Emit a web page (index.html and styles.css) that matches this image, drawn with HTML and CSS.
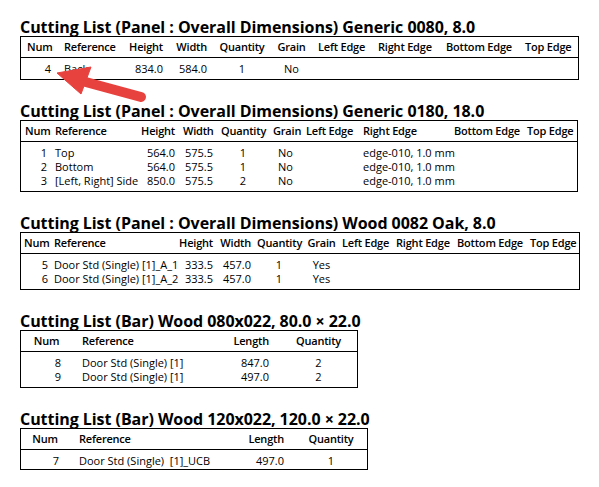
FILE: index.html
```html
<!DOCTYPE html>
<html lang="en">
<head>
<meta charset="utf-8">
<title>Cutting List</title>
<link rel="stylesheet" href="styles.css">
</head>
<body>
<main class="page">
  <section class="sheet">
    <h2 class="title">Cutting List (Panel : Overall Dimensions) Generic 0080, 8.0</h2>
    <table class="grid t1">
      <colgroup><col><col><col><col><col><col><col><col><col><col></colgroup>
      <thead>
        <tr><th class="r">Num</th><th class="l">Reference</th><th class="r">Height</th><th class="r">Width</th><th class="c">Quantity</th><th class="c">Grain</th><th class="l">Left Edge</th><th class="l">Right Edge</th><th class="l">Bottom Edge</th><th class="l">Top Edge</th></tr>
      </thead>
      <tbody>
        <tr><td class="r">4</td><td class="l">Back</td><td class="r">834.0</td><td class="r">584.0</td><td class="c">1</td><td class="c">No</td><td></td><td></td><td></td><td></td></tr>
      </tbody>
    </table>
  </section>

  <section class="sheet">
    <h2 class="title">Cutting List (Panel : Overall Dimensions) Generic 0180, 18.0</h2>
    <table class="grid t2">
      <colgroup><col><col><col><col><col><col><col><col><col><col></colgroup>
      <thead>
        <tr><th class="r">Num</th><th class="l">Reference</th><th class="r">Height</th><th class="r">Width</th><th class="c">Quantity</th><th class="c">Grain</th><th class="l">Left Edge</th><th class="l">Right Edge</th><th class="l">Bottom Edge</th><th class="l">Top Edge</th></tr>
      </thead>
      <tbody>
        <tr><td class="r">1</td><td class="l">Top</td><td class="r">564.0</td><td class="r">575.5</td><td class="c">1</td><td class="c">No</td><td></td><td class="l">edge-010, 1.0 mm</td><td></td><td></td></tr>
        <tr><td class="r">2</td><td class="l">Bottom</td><td class="r">564.0</td><td class="r">575.5</td><td class="c">1</td><td class="c">No</td><td></td><td class="l">edge-010, 1.0 mm</td><td></td><td></td></tr>
        <tr><td class="r">3</td><td class="l">[Left, Right] Side</td><td class="r">850.0</td><td class="r">575.5</td><td class="c">2</td><td class="c">No</td><td></td><td class="l">edge-010, 1.0 mm</td><td></td><td></td></tr>
      </tbody>
    </table>
  </section>

  <section class="sheet">
    <h2 class="title">Cutting List (Panel : Overall Dimensions) Wood 0082 Oak, 8.0</h2>
    <table class="grid t3">
      <colgroup><col><col><col><col><col><col><col><col><col><col></colgroup>
      <thead>
        <tr><th class="r">Num</th><th class="l">Reference</th><th class="r">Height</th><th class="r">Width</th><th class="c">Quantity</th><th class="c">Grain</th><th class="l">Left Edge</th><th class="l">Right Edge</th><th class="l">Bottom Edge</th><th class="l">Top Edge</th></tr>
      </thead>
      <tbody>
        <tr><td class="r">5</td><td class="l">Door Std (Single) [1]_A_1</td><td class="r">333.5</td><td class="r">457.0</td><td class="c">1</td><td class="c">Yes</td><td></td><td></td><td></td><td></td></tr>
        <tr><td class="r">6</td><td class="l">Door Std (Single) [1]_A_2</td><td class="r">333.5</td><td class="r">457.0</td><td class="c">1</td><td class="c">Yes</td><td></td><td></td><td></td><td></td></tr>
      </tbody>
    </table>
  </section>

  <section class="sheet">
    <h2 class="title">Cutting List (Bar) Wood 080x022, 80.0 × 22.0</h2>
    <table class="grid t4 bar">
      <colgroup><col><col><col><col></colgroup>
      <thead>
        <tr><th class="c">Num</th><th class="l">Reference</th><th class="r">Length</th><th class="c">Quantity</th></tr>
      </thead>
      <tbody>
        <tr><td class="r">8</td><td class="l">Door Std (Single) [1]</td><td class="r">847.0</td><td class="c">2</td></tr>
        <tr><td class="r">9</td><td class="l">Door Std (Single) [1]</td><td class="r">497.0</td><td class="c">2</td></tr>
      </tbody>
    </table>
  </section>

  <section class="sheet">
    <h2 class="title">Cutting List (Bar) Wood 120x022, 120.0 × 22.0</h2>
    <table class="grid t5 bar">
      <colgroup><col><col><col><col></colgroup>
      <thead>
        <tr><th class="c">Num</th><th class="l">Reference</th><th class="r">Length</th><th class="c">Quantity</th></tr>
      </thead>
      <tbody>
        <tr><td class="r">7</td><td class="l">Door Std (Single)&nbsp; [1]_UCB</td><td class="r">497.0</td><td class="c">1</td></tr>
      </tbody>
    </table>
  </section>
</main>

<svg class="callout" width="599" height="487" viewBox="0 0 599 487" aria-hidden="true">
  <line x1="82" y1="81" x2="141" y2="97" class="shaft"/>
  <polygon points="57,73 91,67 81,94" class="head"/>
</svg>
</body>
</html>
```

FILE: styles.css
```css
html, body {
  margin: 0;
  padding: 0;
  background: #ffffff;
}

body {
  position: relative;
  width: 599px;
  height: 487px;
  overflow: hidden;
  font-family: "Open Sans", "Noto Sans", "DejaVu Sans", sans-serif;
  color: #000;
}

.page {
  display: flex;
  flex-direction: column;
  align-items: flex-start;
  gap: 22px;
  padding: 18px 0 0 20px;
}

.sheet {
  display: flex;
  flex-direction: column;
}

.title {
  margin: 0;
  font-size: 16px;
  line-height: 18px;
  height: 18px;
  font-weight: 700;
  white-space: nowrap;
  letter-spacing: -0.05px;
}

.grid {
  border-collapse: separate;
  border-spacing: 0;
  border: 1px solid #000;
  table-layout: fixed;
  font-size: 11px;
}

.grid th {
  font-weight: 600;
  height: 20px;
  line-height: 20px;
  padding: 0 4px;
  border-bottom: 1px solid #000;
  white-space: nowrap;
  letter-spacing: -0.2px;
}

.grid td {
  padding: 0 4px;
  line-height: 14px;
  height: 14px;
  white-space: nowrap;
}

.grid tbody tr:first-child td { padding-top: 4px; }
.grid tbody tr:last-child td { padding-bottom: 3px; }

.l { text-align: left; }
.r { text-align: right; }
.c { text-align: center; }

/* Table 1 : roomy single-row panel list */
.grid.t1 { width: 559px; }
.grid.t1 th, .grid.t1 td { padding-left: 6px; padding-right: 6px; }
.grid.t1 tbody tr td {
  height: 20px;
  line-height: 19px;
  padding-top: 0;
  padding-bottom: 1px;
}
.grid.t1 th:first-child, .grid.t1 td:first-child { padding-right: 7px; }
.t1 col:nth-child(1) { width: 37px; }
.t1 col:nth-child(2) { width: 63px; }
.t1 col:nth-child(3) { width: 48px; }
.t1 col:nth-child(4) { width: 44px; }
.t1 col:nth-child(5) { width: 58px; }
.t1 col:nth-child(6) { width: 41px; }
.t1 col:nth-child(7) { width: 60px; }
.t1 col:nth-child(8) { width: 68px; }
.t1 col:nth-child(9) { width: 79px; }
.t1 col:nth-child(10) { width: 59px; }

/* Table 2 */
.t2 { width: 558px; }
.t2 col:nth-child(1) { width: 31px; }
.t2 col:nth-child(2) { width: 85px; }
.t2 col:nth-child(3) { width: 42px; }
.t2 col:nth-child(4) { width: 38px; }
.t2 col:nth-child(5) { width: 52px; }
.t2 col:nth-child(6) { width: 33px; }
.t2 col:nth-child(7) { width: 57px; }
.t2 col:nth-child(8) { width: 91px; }
.t2 col:nth-child(9) { width: 73px; }
.t2 col:nth-child(10) { width: 54px; }
.t2 th:first-child, .t2 td:first-child { padding-right: 5px; }
.t2 th:nth-child(2), .t2 td:nth-child(2) { padding-left: 3px; }

/* Table 3 */
.t3 { width: 560px; }
.t3 col:nth-child(1) { width: 30px; }
.t3 col:nth-child(2) { width: 125px; }
.t3 col:nth-child(3) { width: 40px; }
.t3 col:nth-child(4) { width: 38px; }
.t3 col:nth-child(5) { width: 50px; }
.t3 col:nth-child(6) { width: 35px; }
.t3 col:nth-child(7) { width: 54px; }
.t3 col:nth-child(8) { width: 61px; }
.t3 col:nth-child(9) { width: 73px; }
.t3 col:nth-child(10) { width: 52px; }
.t3 th, .t3 td { padding-left: 3px; padding-right: 3px; }

/* Bar tables */
.bar th:first-child { padding: 0; }
.bar td:first-child { padding-right: 11px; }
.bar th:nth-child(2), .bar td:nth-child(2) { padding-left: 10px; }
.bar th:nth-child(3), .bar td:nth-child(3) { padding-right: 11px; }

.t4 { width: 338px; }
.t4 col:nth-child(1) { width: 51px; }
.t4 col:nth-child(2) { width: 128px; }
.t4 col:nth-child(3) { width: 80px; }
.t4 col:nth-child(4) { width: 77px; }

.t5 { width: 348px; }
.t5 col:nth-child(1) { width: 48px; }
.t5 col:nth-child(2) { width: 147px; }
.t5 col:nth-child(3) { width: 79px; }
.t5 col:nth-child(4) { width: 72px; }
.t5 td:first-child { padding-right: 10px; }
.grid.t5 tbody tr:last-child td { padding-bottom: 1px; }

/* Annotation arrow */
.callout {
  position: absolute;
  left: 0;
  top: 0;
  pointer-events: none;
}

.callout .shaft {
  stroke: #e8423f;
  stroke-width: 10;
  stroke-linecap: round;
}

.callout .head {
  fill: #e8423f;
  stroke: #e8423f;
  stroke-width: 1;
  stroke-linejoin: round;
}
```
